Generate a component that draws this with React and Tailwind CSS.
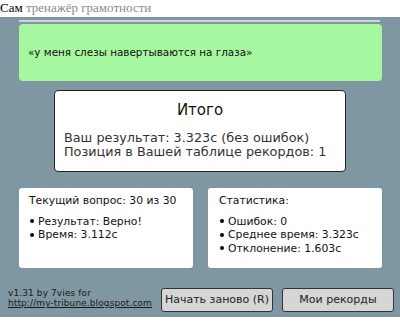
import React from 'react';

const InfoBox = ({ title, items, left }) => (
  <div className={`w-[174px] h-[80px] bg-white rounded-[3px] pt-[6px] ${left ? 'pl-[10px]' : 'pl-[11px]'} text-[10.8px] leading-[13.5px] text-[#111]`}>
    <div>{title}</div>
    <ul className="mt-[7px]">
      {items.map((item) => (
        <li key={item} className="flex items-center">
          <span className="w-[4px] h-[4px] rounded-full bg-black mr-[4px] ml-[1px]"></span>
          {item}
        </li>
      ))}
    </ul>
  </div>
);

const App = () => {
  return (
    <div className="w-[400px] h-[321px] bg-white overflow-hidden font-['DejaVu_Sans',sans-serif]">
      {/* Title */}
      <div className="h-[17px] font-['Liberation_Serif',serif] text-[13px] leading-[15px] whitespace-nowrap">
        <span className="text-black">Сам</span>{' '}
        <span className="text-[#8a8a8a]">тренажёр грамотности</span>
      </div>

      {/* Main panel */}
      <div className="h-[300px] bg-[#7f97a3]">
        <div className="px-[18px] pt-[3px]">
          <div className="h-[2px] bg-[#cdd6da] ml-[1px] mr-[2px]"></div>
          <div className="mt-[2px] ml-[1px] h-[57px] bg-[#a6f7a0] rounded-[4px] flex items-center pl-[9px] text-[10.4px] text-[#111]">
            «у меня слезы навертываются на глаза»
          </div>

          <div className="mt-[9px] mx-auto w-[292px] h-[82px] bg-white border border-[#222] rounded-[4px] pl-[9px] text-[#111]">
            <div className="text-center text-[15px] leading-[18px] pt-[10px] pr-[9px]">Итого</div>
            <div className="mt-[12px] text-[12.8px] leading-[13.5px] text-[#333]">
              <div>Ваш результат: 3.323с (без ошибок)</div>
              <div>Позиция в Вашей таблице рекордов: 1</div>
            </div>
          </div>

          <div className="mt-[16px] ml-[1px] flex gap-[15px]">
            <InfoBox left title="Текущий вопрос: 30 из 30" items={['Результат: Верно!', 'Время: 3.112с']} />
            <InfoBox title="Статистика:" items={['Ошибок: 0', 'Среднее время: 3.323с', 'Отклонение: 1.603с']} />
          </div>
        </div>

        {/* Footer */}
        <div className="mt-[20px] pl-[8px] pr-[6px] flex items-center justify-between">
          <div className="text-[9px] leading-[10px] tracking-[0.1px] text-[#1a1a1a] -mt-[4px]">
            <div>v1.31 by 7vies for</div>
            <a href="#" className="underline">http://my-tribune.blogspot.com</a>
          </div>
          <div className="flex gap-[9px]">
            <button className="w-[112px] h-[24px] bg-[#d6d6d6] border border-[#333] rounded-[3px] text-[11px] text-[#222]">
              Начать заново (R)
            </button>
            <button className="w-[112px] h-[24px] bg-[#d6d6d6] border border-[#333] rounded-[3px] text-[11px] text-[#222]">
              Мои рекорды
            </button>
          </div>
        </div>
      </div>
    </div>
  );
};

export default App;
